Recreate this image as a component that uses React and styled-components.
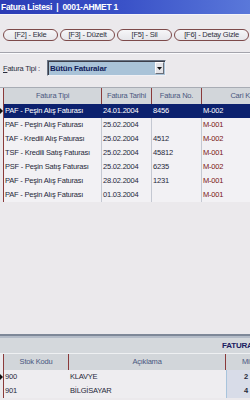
import React from "react";
import styled, { createGlobalStyle } from "styled-components";

const Global = createGlobalStyle`
  html, body { margin: 0; padding: 0; }
  body { background: #ebe9ec; font-family: "Liberation Sans", Arial, sans-serif; }
`;

const Page = styled.div`
  width: 250px;
  height: 400px;
  overflow: hidden;
  display: flex;
  flex-direction: column;
  background: #ebe9ec;
`;

const TitleBar = styled.div`
  height: 14px;
  background: linear-gradient(90deg, #2b3cb6 0%, #3a52c8 50%, #5a78da 100%);
  border-bottom: 1px solid #f4f4f8;
  color: #fff;
  font-weight: bold;
  font-size: 8.5px;
  letter-spacing: -0.3px;
  line-height: 14px;
  padding-left: 1px;
  white-space: nowrap;
`;

const Toolbar = styled.div`
  display: flex;
  gap: 2px;
  padding: 14px 0 0 3px;
  height: 23px;
  border-bottom: 1px solid #a4a4ac;
  box-shadow: 0 1px 0 #fbfbfd;
`;

const Button = styled.button`
  width: ${(p) => p.$w}px;
  height: 12px;
  flex: none;
  padding: 0;
  border: 1px solid #7d4a4a;
  border-radius: 6px;
  background: linear-gradient(#f6f6f8, #e6e6ea);
  color: #2e3040;
  font-family: "Liberation Sans", Arial, sans-serif;
  font-size: 7.5px;
  letter-spacing: -0.2px;
  line-height: 10px;
  white-space: nowrap;
`;

const FilterRow = styled.div`
  display: flex;
  align-items: center;
  margin-top: 7px;
  padding-left: 3px;
  height: 16px;
`;

const Label = styled.span`
  width: 44px;
  font-size: 7.5px;
  letter-spacing: -0.2px;
  color: #2a2c3c;
  white-space: nowrap;
  u { text-decoration: underline; }
`;

const Select = styled.div`
  width: 117px;
  height: 14px;
  display: flex;
  align-items: center;
  background: #a9c3d8;
  border: 1px solid;
  border-color: #6a7484 #f0f0f4 #f0f0f4 #6a7484;
  box-shadow: inset 1px 1px 0 #3a3e4a;
`;

const SelectText = styled.span`
  flex: 1;
  padding-left: 2px;
  font-size: 8px;
  font-weight: bold;
  letter-spacing: -0.2px;
  color: #101c5a;
`;

const SelectArrow = styled.span`
  width: 9px;
  height: 12px;
  margin-right: 1px;
  background: #e4e4e8;
  border: 1px solid;
  border-color: #fbfbfd #6a6e78 #6a6e78 #fbfbfd;
  box-sizing: border-box;
  display: flex;
  align-items: center;
  justify-content: center;
`;

const Grid = styled.div`
  margin-top: 11px;
  display: flex;
  flex-direction: column;
  border-top: 1px solid #a8acb4;
`;

const Row = styled.div`
  display: grid;
  grid-template-columns: 4px 98px 50px 50px 60px;
  height: ${(p) => p.$h}px;
  position: relative;
`;

const Indicator = styled.span`
  position: absolute;
  left: 0;
  top: 50%;
  margin-top: -3px;
  width: 0;
  height: 0;
  border-top: 3px solid transparent;
  border-bottom: 3px solid transparent;
  border-left: 3px solid #101010;
`;

const Gutter = styled.div`
  border-right: 1px solid #8a3a3a;
`;

const HeadCell = styled.div`
  background: #d2d6da;
  border-right: 1px solid #8a3a3a;
  color: #4a5680;
  font-size: 7.5px;
  letter-spacing: -0.2px;
  text-align: ${(p) => p.$align || "center"};
  padding-right: ${(p) => (p.$align === "right" ? "4px" : 0)};
  line-height: 15px;
  white-space: nowrap;
  overflow: hidden;
  &:last-child { border-right: none; }
`;

const Cell = styled.div`
  background: ${(p) => (p.$sel ? "#0c216e" : "#f2f1f4")};
  color: ${(p) => (p.$sel ? "#ffffff" : p.$color || "#26283a")};
  border-right: 1px solid ${(p) => (p.$sel ? "#0c216e" : "#c4c8d2")};
  font-size: 7.5px;
  letter-spacing: -0.2px;
  line-height: 14px;
  padding-left: 1px;
  white-space: nowrap;
  overflow: hidden;
  &:last-child { border-right: none; }
`;

const Spacer = styled.div`
  flex: 1;
`;

const Bottom = styled.div`
  height: 64px;
  border-top: 2px solid #7e8898;
  display: flex;
  flex-direction: column;
`;

const PanelBar = styled.div`
  height: 15px;
  border-top: 2px solid #b4bcc8;
  background: #d4d8dc;
  border-bottom: 1px solid #eef0f2;
  color: #1a2060;
  font-weight: bold;
  font-size: 8px;
  letter-spacing: -0.2px;
  line-height: 15px;
  padding-left: 222px;
  white-space: nowrap;
  overflow: hidden;
`;

const SubRow = styled.div`
  display: grid;
  grid-template-columns: 4px 65px 157px 40px;
  height: ${(p) => p.$h}px;
  position: relative;
`;

const SubHead = styled(HeadCell)`
  line-height: 16px;
  &:last-child { text-align: left; padding-left: 16px; }
`;

const SubCell = styled.div`
  background: ${(p) => (p.$num ? "#d8dce8" : "#eeedf0")};
  border-left: ${(p) => (p.$num ? "1px solid #a8c4dc" : "none")};
  color: #26283a;
  font-size: 7.5px;
  letter-spacing: -0.2px;
  font-weight: ${(p) => (p.$num ? "bold" : "normal")};
  text-align: ${(p) => (p.$num ? "right" : "left")};
  padding: ${(p) => (p.$num ? "0 18px 0 0" : "0 0 0 1px")};
  line-height: 14px;
  white-space: nowrap;
  overflow: hidden;
`;

const Arrow = () => (
  <svg width="5" height="3" viewBox="0 0 5 3">
    <path d="M0 0h5L2.5 3z" fill="#101010" />
  </svg>
);

const rows = [
  ["PAF - Peşin Alış Faturası", "24.01.2004", "8456", "M-002"],
  ["PAF - Peşin Alış Faturası", "25.02.2004", "", "M-001"],
  ["TAF - Kredili Alış Faturası", "25.02.2004", "4512", "M-002"],
  ["TSF - Kredili Satış Faturası", "25.02.2004", "45812", "M-001"],
  ["PSF - Peşin Satış Faturası", "25.02.2004", "6235", "M-002"],
  ["PAF - Peşin Alış Faturası", "28.02.2004", "1231", "M-001"],
  ["PAF - Peşin Alış Faturası", "01.03.2004", "", "M-001"],
];

const items = [
  ["900", "KLAVYE", "2"],
  ["901", "BİLGİSAYAR", "4"],
];

export default function App() {
  return (
    <>
      <Global />
      <Page>
        <TitleBar>Fatura Listesi &nbsp;|&nbsp; 0001-AHMET 1</TitleBar>
        <Toolbar>
          <Button $w={55}>[F2] - Ekle</Button>
          <Button $w={55}>[F3] - Düzelt</Button>
          <Button $w={55}>[F5] - Sil</Button>
          <Button $w={75}>[F6] - Detay Gizle</Button>
        </Toolbar>
        <FilterRow>
          <Label>
            <u>F</u>atura Tipi :
          </Label>
          <Select>
            <SelectText>Bütün Faturalar</SelectText>
            <SelectArrow>
              <Arrow />
            </SelectArrow>
          </Select>
        </FilterRow>
        <Grid>
          <Row $h={16}>
            <Gutter />
            <HeadCell>Fatura Tipi</HeadCell>
            <HeadCell>Fatura Tarihi</HeadCell>
            <HeadCell>Fatura No.</HeadCell>
            <HeadCell $align="right">Cari Kod</HeadCell>
          </Row>
          {rows.map((r, i) => (
            <Row key={i} $h={14}>
              {i === 0 && <Indicator />}
              <Gutter />
              <Cell $sel={i === 0}>{r[0]}</Cell>
              <Cell $sel={i === 0}>{r[1]}</Cell>
              <Cell $sel={i === 0}>{r[2]}</Cell>
              <Cell $sel={i === 0} $color="#7a1414">{r[3]}</Cell>
            </Row>
          ))}
        </Grid>
        <Spacer />
        <Bottom>
          <PanelBar>FATURA DETAYI</PanelBar>
          <SubRow $h={16}>
            <Gutter />
            <SubHead>Stok Kodu</SubHead>
            <SubHead>Açıklama</SubHead>
            <SubHead>Miktar</SubHead>
          </SubRow>
          {items.map((it, i) => (
            <SubRow key={i} $h={14}>
              {i === 0 && <Indicator />}
              <Gutter />
              <SubCell>{it[0]}</SubCell>
              <SubCell>{it[1]}</SubCell>
              <SubCell $num>{it[2]}</SubCell>
            </SubRow>
          ))}
        </Bottom>
      </Page>
    </>
  );
}
